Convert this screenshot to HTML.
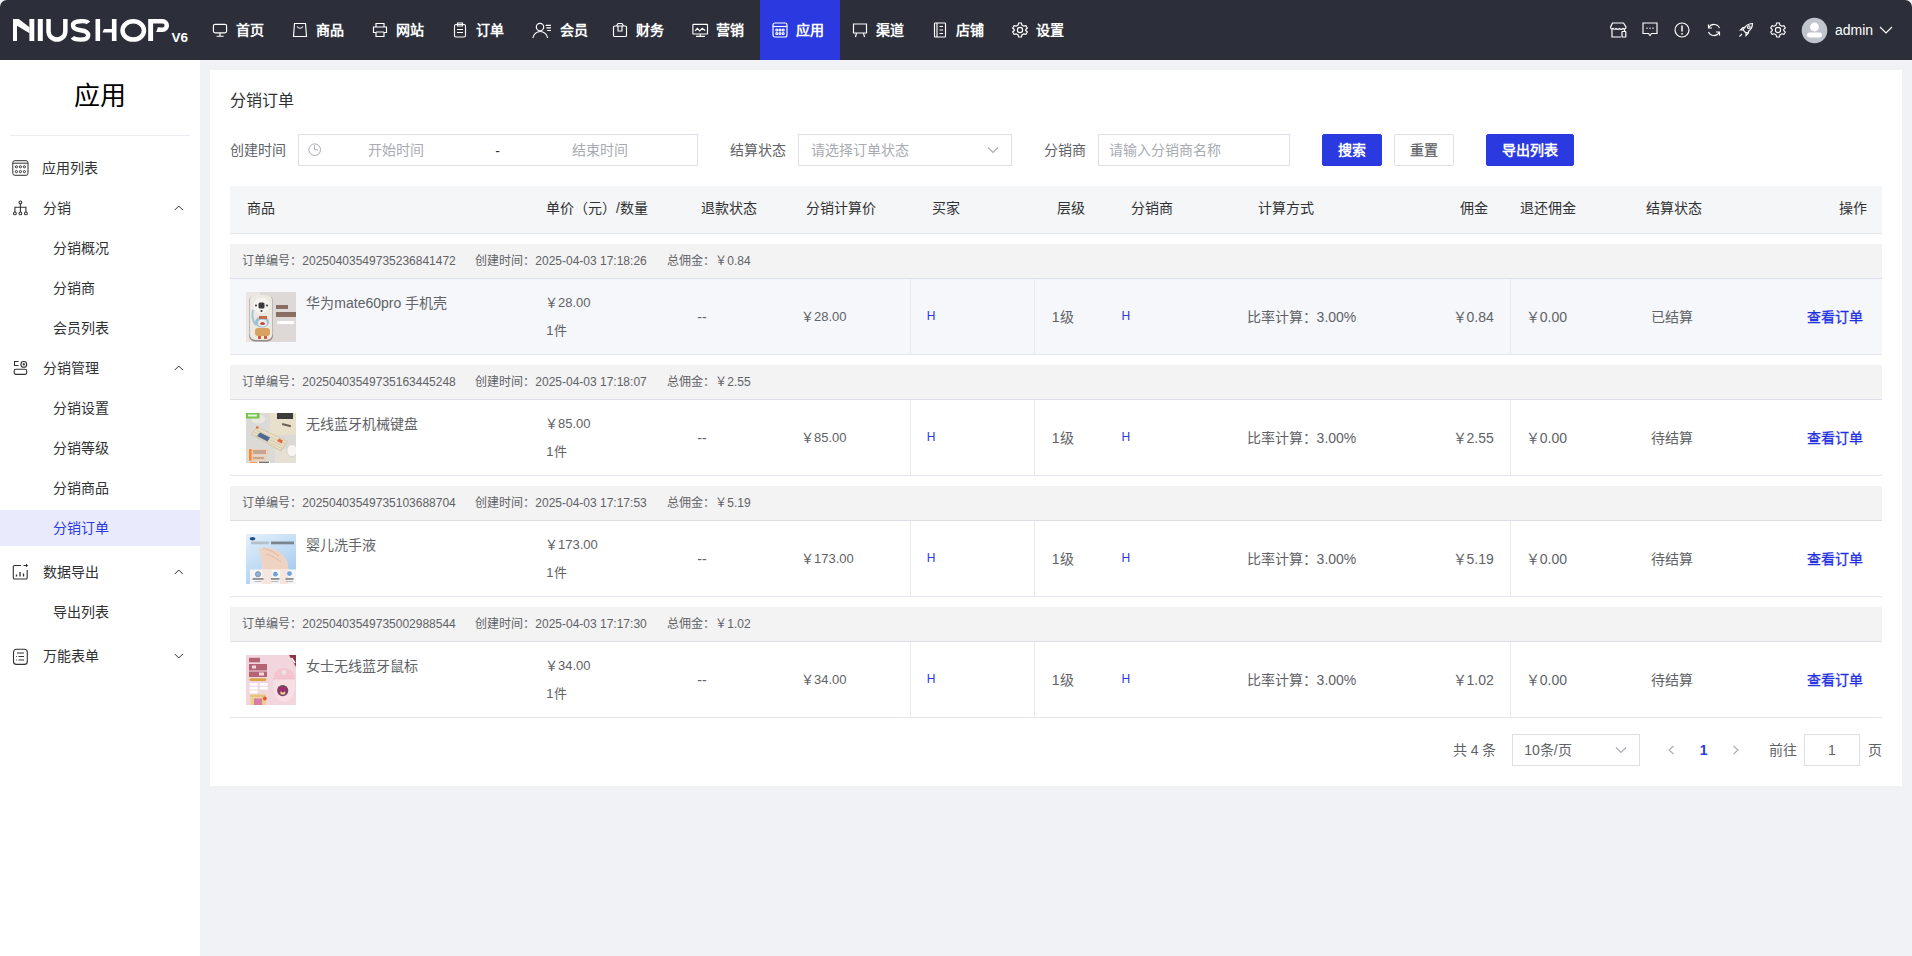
<!DOCTYPE html>
<html lang="zh-CN"><head><meta charset="utf-8">
<style>
*{margin:0;padding:0;box-sizing:border-box}
html,body{width:1912px;height:956px;overflow:hidden;background:#f0f2f5;font-family:"Liberation Sans",sans-serif;font-size:14px;color:#303133}
#top{position:absolute;left:0;top:0;width:1912px;height:60px;background:#2c2f3a;border-radius:7px 7px 0 0;overflow:hidden}
.nav{position:absolute;top:0;height:60px;width:80px;color:#fff;font-size:14px;font-weight:bold}
.nav.on{background:#2a3ae0}
.nav svg{position:absolute;left:12px;top:22px}
.nav span{position:absolute;left:36px;top:20px;line-height:20px;white-space:nowrap}
.ric{position:absolute;top:22px}
#side{position:absolute;left:0;top:60px;width:200px;height:896px;background:#fff}
.stitle{position:absolute;left:0;width:200px;top:18px;text-align:center;font-size:26px;color:#000;line-height:36px}
.sdiv{position:absolute;left:10px;top:75px;width:180px;height:1px;background:#ebedf2}
.mi{position:absolute;left:0;width:200px;height:36px;line-height:36px;font-size:14px;color:#303133}
.mi .t{position:absolute;left:42px;top:2.5px}
.mi.on .t{top:0}
.mi.sub .t{left:53px}
.mi.on{background:#e9ebfc}
.mi.on .t{color:#2a3ae0}
.mi svg.ic{position:absolute;left:12px;top:13px}
.mi svg.ar{position:absolute;left:174px;top:17.5px}
#card{position:absolute;left:210px;top:70px;width:1692px;height:716px;background:#fff}
.abs{position:absolute}
.tx{position:absolute;white-space:nowrap}
.box{position:absolute;border:1px solid #dcdfe6;background:#fff;border-radius:0}
.btn{position:absolute;height:32px;line-height:30px;text-align:center;border:1px solid #dcdfe6;border-radius:2px;background:#fff;color:#606266;font-size:14px}
.btn.pri{background:#2a3ae0;border-color:#2a3ae0;color:#fff;font-weight:bold}
</style></head><body>
<div id="top">
  <svg style="position:absolute;left:0;top:0" width="200" height="60" fill="#fff">
    <rect x="13" y="19" width="4" height="22"/>
    <polygon points="13,19 18.8,19 29.5,27.2 29.5,33.3 17,25.8 13,25.8"/>
    <rect x="29.4" y="19" width="4.9" height="22"/>
    <rect x="37.8" y="19" width="5" height="22"/>
    <path d="M48.55,19 V31.15 A8.4,8.4 0 0 0 65.35,31.15 V19" fill="none" stroke="#fff" stroke-width="4.5"/>
    <path d="M88.3,23 C86.5,20.5 83.5,21.2 80.5,21.2 C76.5,21.2 73,22 73,25.5 C73,29 77,29.8 80.5,30.2 C85,30.7 88.2,32 88.2,35.5 C88.2,39 84.5,39.6 80.5,39.6 C77,39.6 74,39.3 72.5,37.3" fill="none" stroke="#fff" stroke-width="4.4"/>
    <rect x="95.5" y="19" width="4.6" height="22"/>
    <polygon points="104,28.9 112,28.9 112,32.4 102.5,32.4"/>
    <rect x="111.9" y="19" width="4.6" height="22"/>
    <ellipse cx="133.25" cy="30.45" rx="10.7" ry="9.15" fill="none" stroke="#fff" stroke-width="4.5"/>
    <rect x="148.2" y="19" width="4.9" height="22"/>
    <path d="M151,21.3 H162.6 A4.2,4.2 0 0 1 162.6,29.7 H157.5" fill="none" stroke="#fff" stroke-width="4.5"/>
    <polygon points="156,31.9 158.5,27.5 160,27.5 158,31.9"/>
    <text x="171.5" y="41.8" font-family="Liberation Sans" font-weight="bold" font-size="13.5">V6</text>
  </svg>
  <div class="nav" style="left:200px"><svg width="16" height="16" viewBox="0 0 16 16" fill="none" stroke="#fff" stroke-width="1.15"><rect x="1.4" y="2.3" width="13.2" height="8.6" rx="1.8"/><path d="M8,10.9 V14 M4.6,14.2 H11.6"/></svg><span>首页</span></div>
  <div class="nav" style="left:280px"><svg width="16" height="16" viewBox="0 0 16 16" fill="none" stroke="#fff" stroke-width="1.15"><path d="M2.5,1.5 H13.5 L14.5,14.5 H1.5 Z"/><path d="M5,4.5 Q8,8 11,4.5"/></svg><span>商品</span></div>
  <div class="nav" style="left:360px"><svg width="16" height="16" viewBox="0 0 16 16" fill="none" stroke="#fff" stroke-width="1.15"><path d="M4,5 V1.5 H12 V5 M1.5,5 H14.5 V10.5 H12 V14.5 H4 V10.5 H1.5 Z M4,10 H12"/></svg><span>网站</span></div>
  <div class="nav" style="left:440px"><svg width="16" height="16" viewBox="0 0 16 16" fill="none" stroke="#fff" stroke-width="1.15"><rect x="2.5" y="2.5" width="11" height="12.5" rx="1.5"/><path d="M5.5,1 H10.5 V4 H5.5 Z M5,7.5 H11 M5,10.5 H11"/></svg><span>订单</span></div>
  <div class="nav" style="left:520px"><svg width="20" height="17" viewBox="0 0 20 17" fill="none" stroke="#fff" stroke-width="1.15"><circle cx="8" cy="5" r="3.7"/><path d="M0.9,16 A7.4,7.4 0 0 1 15.6,16"/><path d="M13.6,3.3 H19 M14.4,5.9 H19 M15.2,8.5 H19" stroke-width="1.2"/></svg><span style="left:40px">会员</span></div>
  <div class="nav" style="left:600px"><svg width="16" height="16" viewBox="0 0 16 16" fill="none" stroke="#fff" stroke-width="1.15"><rect x="1.5" y="4" width="13" height="10.5" rx="1"/><path d="M4.5,4 L6,1.5 H10 L11.5,4 M6,4 V9 H10 V4"/></svg><span>财务</span></div>
  <div class="nav" style="left:680px"><svg width="18" height="16" viewBox="0 0 18 16" fill="none" stroke="#fff" stroke-width="1.15"><rect x="0.9" y="2.4" width="14.6" height="9.6" rx="0.6"/><path d="M3.2,8.8 L5.3,6.3 L7.8,8.8 L10.2,6.2 L13.2,8.4" stroke-width="1.2"/><path d="M8.2,12 V14 M4,14.3 H13"/></svg><span>营销</span></div>
  <div class="nav on" style="left:760px"><svg width="16" height="16" viewBox="0 0 16 16" fill="none" stroke="#fff" stroke-width="1.15"><rect x="1" y="1" width="14" height="14" rx="2"/><path d="M1,4.5 H15"/><circle cx="4.8" cy="8" r="1"/><circle cx="8" cy="8" r="1"/><circle cx="11.2" cy="8" r="1"/><circle cx="4.8" cy="11.5" r="1"/><circle cx="8" cy="11.5" r="1"/><circle cx="11.2" cy="11.5" r="1"/></svg><span>应用</span></div>
  <div class="nav" style="left:840px"><svg width="16" height="16" viewBox="0 0 16 16" fill="none" stroke="#fff" stroke-width="1.15"><path d="M1.5,2 H14.5 V11 H1.5 Z M4.5,11 L3.5,15 M11.5,11 L12.5,15"/></svg><span>渠道</span></div>
  <div class="nav" style="left:920px"><svg width="16" height="16" viewBox="0 0 16 16" fill="none" stroke="#fff" stroke-width="1.15"><rect x="2.5" y="1" width="11" height="14" rx="0.5"/><path d="M5,1 V15 M7.5,4.5 H11 M7.5,8 H11 M7.5,11.5 H11"/></svg><span>店铺</span></div>
  <div class="nav" style="left:1000px"><svg width="16" height="16" viewBox="0 0 16 16" fill="none" stroke="#fff" stroke-width="1.2"><path d="M6.6,1 H9.4 L9.9,3.1 L11.8,4.2 L13.9,3.6 L15.3,6 L13.7,7.5 V8.5 L15.3,10 L13.9,12.4 L11.8,11.8 L9.9,12.9 L9.4,15 H6.6 L6.1,12.9 L4.2,11.8 L2.1,12.4 L0.7,10 L2.3,8.5 V7.5 L0.7,6 L2.1,3.6 L4.2,4.2 L6.1,3.1 Z"/><circle cx="8" cy="8" r="2.6"/></svg><span>设置</span></div>

  <svg class="ric" style="left:1610px" width="17" height="16" viewBox="0 0 17 16" fill="none" stroke="#fff" stroke-width="1.2"><path d="M2.5,1 H13.5 L16,5 C16,7 14,7.5 13,6.5 C12,7.5 10.5,7.5 9.5,6.5 C8.5,7.5 7,7.5 6,6.5 C5,7.5 3.5,7.5 3,6.5 C2,7.5 0.6,7 0.6,5 Z M2,7.5 V15 H11 M14.5,7.5 V9"/><rect x="12" y="9.5" width="3.8" height="5.5" rx="0.6"/></svg>
  <svg class="ric" style="left:1642px" width="16" height="15" viewBox="0 0 16 15" fill="none" stroke="#fff" stroke-width="1.15"><path d="M1,1 H15 V11.5 H9.5 L8,13.5 L6.5,11.5 H1 Z"/><path d="M4.5,6.3 H5.5 M7.5,6.3 H8.5 M10.5,6.3 H11.5" stroke-width="1.6"/></svg>
  <svg class="ric" style="left:1674px" width="16" height="16" viewBox="0 0 16 16" fill="none" stroke="#fff" stroke-width="1.15"><circle cx="8" cy="8" r="7"/><path d="M8,3.5 V9.5 M8,11 V12.5" stroke-width="1.5"/></svg>
  <svg class="ric" style="left:1706px;top:23px" width="16" height="14" viewBox="0 0 16 14" fill="none" stroke="#fff" stroke-width="1.15"><path d="M13.5,5 A6,6 0 0 0 2.8,4.5 M2.5,9 A6,6 0 0 0 13.2,9.5"/><path d="M2.5,1.5 V5 H6 M13.5,12.5 V9 H10" stroke-width="1.2"/></svg>
  <svg class="ric" style="left:1738px" width="16" height="16" viewBox="0 0 16 16" fill="none" stroke="#fff" stroke-width="1.15"><path d="M14.5,1.5 C10,1.5 7,4 5,8 L8,11 C12,9 14.5,6 14.5,1.5 Z M5,8 L2.5,8 L5,5.5 H7.5 M8,11 V13.5 L10.5,11 V8.5 M4,12 L1.5,14.5"/><circle cx="10.8" cy="5.2" r="1.3"/></svg>
  <svg class="ric" style="left:1770px" width="16" height="16" viewBox="0 0 16 16" fill="none" stroke="#fff" stroke-width="1.1"><path d="M6.6,1 H9.4 L9.9,3.1 L11.8,4.2 L13.9,3.6 L15.3,6 L13.7,7.5 V8.5 L15.3,10 L13.9,12.4 L11.8,11.8 L9.9,12.9 L9.4,15 H6.6 L6.1,12.9 L4.2,11.8 L2.1,12.4 L0.7,10 L2.3,8.5 V7.5 L0.7,6 L2.1,3.6 L4.2,4.2 L6.1,3.1 Z"/><circle cx="8" cy="8" r="2.6"/></svg>
  <svg class="ric" style="left:1801px;top:17px" width="27" height="27" viewBox="0 0 27 27"><circle cx="13.5" cy="13.5" r="12.8" fill="#c0c4cc"/><circle cx="13.5" cy="10" r="4.4" fill="#fff"/><rect x="6" y="15.5" width="15" height="5" rx="2.5" fill="#fff"/></svg>
  <div style="position:absolute;left:1835px;top:20px;line-height:20px;color:#fff;font-size:14px">admin</div>
  <svg class="ric" style="left:1879px;top:26px" width="14" height="8" viewBox="0 0 14 8" fill="none" stroke="#fff" stroke-width="1.2"><path d="M1,1 L7,7 L13,1"/></svg>
</div>

<div id="side">
  <div class="stitle">应用</div>
  <div class="sdiv"></div>
  <div class="mi" style="top:87px"><svg class="ic" width="18" height="18" viewBox="0 0 18 18" fill="none" stroke="#303133" stroke-width="1.1"><g stroke-width="1"><rect x="0.8" y="0.7" width="15.2" height="14.6" rx="2"/><path d="M0.8,3.2 H16"/><circle cx="4.4" cy="6.8" r="1.1"/><circle cx="8.4" cy="6.8" r="1.1"/><circle cx="12.4" cy="6.8" r="1.1"/><circle cx="4.4" cy="11.6" r="1.1"/><circle cx="8.4" cy="11.6" r="1.1"/><circle cx="12.4" cy="11.6" r="1.1"/></g></svg><span class="t">应用列表</span></div>
  <div class="mi" style="top:127px"><svg class="ic" width="18" height="18" viewBox="0 0 18 18" fill="none" stroke="#303133" stroke-width="1.1"><circle cx="8.4" cy="2.4" r="1.4"/><path d="M8.4,3.8 V7.2 M2.9,12 V7.2 H13.9 V12 M8.4,7.2 V12"/><circle cx="2.9" cy="13.4" r="1.4"/><circle cx="8.4" cy="13.4" r="1.4"/><circle cx="13.9" cy="13.4" r="1.4"/></svg><span class="t" style="left:43px">分销</span><svg class="ar" width="10" height="6" viewBox="0 0 10 6" fill="none" stroke="#303133" stroke-width="1"><path d="M0.8,5 L4.8,1 L8.8,5"/></svg></div>
  <div class="mi sub" style="top:167px"><span class="t">分销概况</span></div>
  <div class="mi sub" style="top:207px"><span class="t">分销商</span></div>
  <div class="mi sub" style="top:247px"><span class="t">会员列表</span></div>
  <div class="mi" style="top:287px"><svg class="ic" width="18" height="18" viewBox="0 0 18 18" fill="none" stroke="#303133" stroke-width="1.1"><path d="M6.5,1.5 H2.5 V5.5 H6.5"/><circle cx="11.8" cy="4.4" r="2.9"/><circle cx="11.8" cy="4.4" r="0.6" fill="#303133"/><rect x="2.2" y="9.2" width="12.5" height="5.2" rx="1.6"/></svg><span class="t" style="left:43px">分销管理</span><svg class="ar" width="10" height="6" viewBox="0 0 10 6" fill="none" stroke="#303133" stroke-width="1"><path d="M0.8,5 L4.8,1 L8.8,5"/></svg></div>
  <div class="mi sub" style="top:327px"><span class="t">分销设置</span></div>
  <div class="mi sub" style="top:367px"><span class="t">分销等级</span></div>
  <div class="mi sub" style="top:407px"><span class="t">分销商品</span></div>
  <div class="mi sub on" style="top:450px"><span class="t">分销订单</span></div>
  <div class="mi" style="top:491px"><svg class="ic" width="18" height="18" viewBox="0 0 18 18" fill="none" stroke="#303133" stroke-width="1.1"><path d="M9,1.5 H2.5 A1.2,1.2 0 0 0 1.3,2.7 V13.8 A1.2,1.2 0 0 0 2.5,15 H14 A1.2,1.2 0 0 0 15.2,13.8 V6"/><path d="M11.5,1.5 H15.5 M14,0 L15.5,1.5 L14,3" stroke-width="1"/><path d="M4.5,10.5 V12.5 M8,8 V12.5 M11.5,9.5 V12.5" stroke-width="1.3"/></svg><span class="t" style="left:43px">数据导出</span><svg class="ar" width="10" height="6" viewBox="0 0 10 6" fill="none" stroke="#303133" stroke-width="1"><path d="M0.8,5 L4.8,1 L8.8,5"/></svg></div>
  <div class="mi sub" style="top:531px"><span class="t">导出列表</span></div>
  <div class="mi" style="top:575px"><svg class="ic" width="18" height="18" viewBox="0 0 18 18" fill="none" stroke="#303133" stroke-width="1.1"><rect x="1.5" y="1.2" width="13.8" height="15.2" rx="3"/><path d="M5,5 H12 M6.5,8.5 H12 M6.5,12 H12 M4.2,8.5 H5 M4.2,12 H5"/></svg><span class="t" style="left:43px">万能表单</span><svg class="ar" width="10" height="6" viewBox="0 0 10 6" fill="none" stroke="#303133" stroke-width="1"><path d="M0.8,1 L4.8,5 L8.8,1"/></svg></div>
</div>
<div id="card"></div>
<div id="cardc"><div class="tx" style="left:230.3px;top:88.7px;font-size:16px;line-height:24px;color:#303133;">分销订单</div>
<div class="tx" style="left:230.3px;top:139.5px;font-size:14px;line-height:20px;color:#606266;">创建时间</div>
<div class="box" style="left:298px;top:134px;width:400px;height:32px"></div>
<svg class="abs" style="left:308px;top:143px" width="14" height="14" viewBox="0 0 14 14" fill="none" stroke="#a8abb2" stroke-width="1"><circle cx="6.7" cy="6.7" r="5.8"/><path d="M6.5,2.3 V6.8 H10.2"/></svg>
<div class="tx" style="left:367.8px;top:139.5px;font-size:14px;line-height:20px;color:#a8abb2;">开始时间</div>
<div class="tx" style="left:495.3px;top:140.5px;font-size:14px;line-height:20px;color:#303133;">-</div>
<div class="tx" style="left:571.8px;top:139.5px;font-size:14px;line-height:20px;color:#a8abb2;">结束时间</div>
<div class="tx" style="left:730.3px;top:139.5px;font-size:14px;line-height:20px;color:#606266;">结算状态</div>
<div class="box" style="left:798px;top:134px;width:214px;height:32px"></div>
<div class="tx" style="left:810.8px;top:139.5px;font-size:14px;line-height:20px;color:#a8abb2;">请选择订单状态</div>
<svg class="abs" style="left:987px;top:146px" width="12" height="8" viewBox="0 0 12 8" fill="none" stroke="#a8abb2" stroke-width="1.1"><path d="M1,1.5 L6,6.5 L11,1.5"/></svg>
<div class="tx" style="left:1044.3px;top:139.5px;font-size:14px;line-height:20px;color:#606266;">分销商</div>
<div class="box" style="left:1098px;top:134px;width:192px;height:32px"></div>
<div class="tx" style="left:1109.3px;top:139.5px;font-size:14px;line-height:20px;color:#a8abb2;">请输入分销商名称</div>
<div class="btn pri" style="left:1322px;top:134px;width:60px">搜索</div>
<div class="btn" style="left:1394px;top:134px;width:60px;-webkit-text-stroke:0.25px #606266">重置</div>
<div class="btn pri" style="left:1486px;top:134px;width:88px">导出列表</div>
<div class="abs" style="left:230px;top:186px;width:1652px;height:47px;background:#f5f6f8"></div>
<div class="abs" style="left:230px;top:233px;width:1652px;height:1px;background:#e3e6ef"></div>
<div class="tx" style="left:246.60000000000002px;top:197.7px;font-size:14px;line-height:20px;color:#303133;">商品</div>
<div class="tx" style="left:546.0999999999999px;top:197.7px;font-size:14px;line-height:20px;color:#303133;">单价（元）/数量</div>
<div class="tx" style="left:701.3px;top:197.7px;font-size:14px;line-height:20px;color:#303133;">退款状态</div>
<div class="tx" style="left:806.0px;top:197.7px;font-size:14px;line-height:20px;color:#303133;">分销计算价</div>
<div class="tx" style="left:932.0px;top:197.7px;font-size:14px;line-height:20px;color:#303133;">买家</div>
<div class="tx" style="left:1057.3px;top:197.7px;font-size:14px;line-height:20px;color:#303133;">层级</div>
<div class="tx" style="left:1131.2px;top:197.7px;font-size:14px;line-height:20px;color:#303133;">分销商</div>
<div class="tx" style="left:1257.5px;top:197.7px;font-size:14px;line-height:20px;color:#303133;">计算方式</div>
<div class="tx" style="left:1460.0px;top:197.7px;font-size:14px;line-height:20px;color:#303133;">佣金</div>
<div class="tx" style="left:1519.8px;top:197.7px;font-size:14px;line-height:20px;color:#303133;">退还佣金</div>
<div class="tx" style="left:1646.2px;top:197.7px;font-size:14px;line-height:20px;color:#303133;">结算状态</div>
<div class="tx" style="left:1838.5px;top:197.7px;font-size:14px;line-height:20px;color:#303133;">操作</div>
<div class="abs" style="left:230px;top:244px;width:1652px;height:34px;background:#f3f3f3"></div>
<div class="abs" style="left:230px;top:278px;width:1652px;height:1px;background:#dcdfe9"></div>
<div class="abs" style="left:230px;top:279px;width:1652px;height:75px;background:#f5f7fb"></div>
<div class="abs" style="left:230px;top:354px;width:1652px;height:1px;background:#e5e7ef"></div>
<div class="abs" style="left:910px;top:279px;width:1px;height:75px;background:#e8eaf1"></div>
<div class="abs" style="left:1034px;top:279px;width:1px;height:75px;background:#e8eaf1"></div>
<div class="abs" style="left:1510px;top:279px;width:1px;height:75px;background:#e8eaf1"></div>
<div class="tx" style="left:242.3px;top:252.5px;font-size:12px;line-height:16px;color:#606266;">订单编号：20250403549735236841472</div>
<div class="tx" style="left:475.3px;top:252.5px;font-size:12px;line-height:16px;color:#606266;">创建时间：2025-04-03 17:18:26</div>
<div class="tx" style="left:667.3px;top:252.5px;font-size:12px;line-height:16px;color:#606266;">总佣金：￥0.84</div>
<div class="abs" style="left:246px;top:292px;width:50px;height:50px"><svg width="50" height="50" viewBox="0 0 50 50"><rect width="50" height="50" fill="#ded9d6"/><rect x="0" y="0" width="14" height="50" fill="#ebe6e2"/><rect x="3" y="3.5" width="24" height="46" rx="6" fill="#8f8a84"/><rect x="3.5" y="3" width="23" height="45" rx="6" fill="#ece9e2"/><circle cx="15.5" cy="13.5" r="8" fill="#f4f2ee"/><rect x="12.5" y="10.5" width="6" height="6" rx="1.5" fill="#3a3a3a"/><circle cx="10" cy="13.5" r="1" fill="#333"/><circle cx="21" cy="13.5" r="1" fill="#333"/><circle cx="15.5" cy="19" r="1" fill="#333"/><path d="M7,18 Q5,28 10,33" stroke="#a8c4d4" stroke-width="2" fill="none"/><ellipse cx="16" cy="30" rx="7" ry="5.5" fill="#9fc0cf"/><ellipse cx="16.5" cy="31" rx="4.5" ry="3.5" fill="#eee"/><rect x="13" y="24" width="8" height="3" fill="#c86a4a"/><ellipse cx="16.5" cy="31.5" rx="2.5" ry="1.5" fill="#c04a3a"/><rect x="9" y="36" width="15" height="8" rx="3" fill="#d9a160"/><rect x="12" y="44" width="3" height="3" fill="#d06030"/><rect x="18" y="44" width="3" height="3" fill="#d06030"/><rect x="30" y="13" width="12" height="4" fill="#8a6e62"/><rect x="30" y="20" width="20" height="5" fill="#8a6e62"/><rect x="31" y="29" width="17" height="3" rx="1.5" fill="#fff"/></svg></div>
<div class="tx" style="left:306.3px;top:292.5px;font-size:14px;line-height:20px;color:#606266;">华为mate60pro 手机壳</div>
<div class="tx" style="left:545.0px;top:292.6px;font-size:13px;line-height:20px;color:#606266;">￥28.00</div>
<div class="tx" style="left:546.3px;top:320.5px;font-size:13px;line-height:20px;color:#606266;">1件</div>
<div class="tx" style="left:697.3px;top:306.5px;font-size:14px;line-height:20px;color:#606266;">--</div>
<div class="tx" style="left:801.0px;top:306.5px;font-size:13px;line-height:20px;color:#606266;">￥28.00</div>
<div class="tx" style="left:926.8px;top:305.5px;font-size:12px;line-height:20px;color:#2a3ae0;">H</div>
<div class="tx" style="left:1051.8px;top:306.5px;font-size:14px;line-height:20px;color:#606266;">1级</div>
<div class="tx" style="left:1121.6px;top:305.5px;font-size:12px;line-height:20px;color:#2a3ae0;">H</div>
<div class="tx" style="left:1246.6px;top:306.5px;font-size:14px;line-height:20px;color:#606266;">比率计算：3.00%</div>
<div class="tx" style="left:1393.8px;top:306.5px;font-size:14px;line-height:20px;color:#606266;width:100px;text-align:right">￥0.84</div>
<div class="tx" style="left:1525.8px;top:306.5px;font-size:14px;line-height:20px;color:#606266;">￥0.00</div>
<div class="tx" style="left:1650.8px;top:306.5px;font-size:14px;line-height:20px;color:#606266;">已结算</div>
<div class="tx" style="left:1807.3px;top:307.0px;font-size:14px;line-height:20px;color:#1f30e0;-webkit-text-stroke:0.3px #1f30e0">查看订单</div>
<div class="abs" style="left:230px;top:365px;width:1652px;height:34px;background:#f3f3f3"></div>
<div class="abs" style="left:230px;top:399px;width:1652px;height:1px;background:#dcdfe9"></div>
<div class="abs" style="left:230px;top:400px;width:1652px;height:75px;background:#fff"></div>
<div class="abs" style="left:230px;top:475px;width:1652px;height:1px;background:#e5e7ef"></div>
<div class="abs" style="left:910px;top:400px;width:1px;height:75px;background:#e8eaf1"></div>
<div class="abs" style="left:1034px;top:400px;width:1px;height:75px;background:#e8eaf1"></div>
<div class="abs" style="left:1510px;top:400px;width:1px;height:75px;background:#e8eaf1"></div>
<div class="tx" style="left:242.3px;top:373.5px;font-size:12px;line-height:16px;color:#606266;">订单编号：20250403549735163445248</div>
<div class="tx" style="left:475.3px;top:373.5px;font-size:12px;line-height:16px;color:#606266;">创建时间：2025-04-03 17:18:07</div>
<div class="tx" style="left:667.3px;top:373.5px;font-size:12px;line-height:16px;color:#606266;">总佣金：￥2.55</div>
<div class="abs" style="left:246px;top:413px;width:50px;height:50px"><svg width="50" height="50" viewBox="0 0 50 50"><rect width="50" height="50" fill="#dcdad7"/><rect x="29" y="36" width="21" height="14" fill="#e6e0d4"/><ellipse cx="12" cy="6" rx="7" ry="4.5" fill="#ebe7e1"/><rect x="0" y="0" width="13.5" height="5.5" fill="#72c44a"/><rect x="2" y="1.5" width="9" height="2" fill="#e8f4e0"/><rect x="24" y="0" width="26" height="22" fill="#e8e0cb"/><rect x="31" y="0" width="16" height="6" fill="#3c3c3a"/><rect x="36" y="11" width="9" height="2" fill="#6a6258" transform="rotate(15 40 12)"/><polygon points="4.5,21.5 11.3,13.6 41.8,28.2 35,38.4" fill="#cfc3a8"/><polygon points="5.5,21.3 11.6,14.5 40.8,28.4 34.6,37.3" fill="#e9dfc6"/><path d="M8,19 L37,33 M10,17 L39,31 M7,21.5 L36,35.5" stroke="#c8bca0" stroke-width="0.6"/><polygon points="11,23 14,19.5 24,24.5 21.5,28.5" fill="#4f6894"/><polygon points="31,28 33,25.5 37,27.5 35.5,30.5" fill="#e46a42"/><rect x="10" y="13.5" width="2.5" height="2" fill="#e46a42"/><ellipse cx="46" cy="37.5" rx="5.2" ry="6.2" fill="#f6f5f2"/><ellipse cx="46" cy="37.5" rx="5.2" ry="6.2" fill="none" stroke="#bdb8b0" stroke-width="0.5"/><rect x="3" y="36" width="19" height="5.8" fill="#efcdb2"/><rect x="3" y="43" width="17" height="4.6" fill="#efcdb2"/><rect x="3" y="36" width="2.6" height="11.6" fill="#f28a2e"/><rect x="7" y="37.5" width="13" height="1" fill="#9a8070"/><rect x="7" y="39.5" width="13" height="1" fill="#9a8070"/><rect x="7" y="44.5" width="11" height="1" fill="#9a8070"/><rect x="3" y="48.5" width="21" height="1.8" fill="#fff"/><rect x="3.5" y="48.6" width="8" height="1.6" fill="#f3a05a"/><rect x="13" y="48.6" width="10" height="1.6" fill="#777"/></svg></div>
<div class="tx" style="left:306.3px;top:413.5px;font-size:14px;line-height:20px;color:#606266;">无线蓝牙机械键盘</div>
<div class="tx" style="left:545.0px;top:413.6px;font-size:13px;line-height:20px;color:#606266;">￥85.00</div>
<div class="tx" style="left:546.3px;top:441.5px;font-size:13px;line-height:20px;color:#606266;">1件</div>
<div class="tx" style="left:697.3px;top:427.5px;font-size:14px;line-height:20px;color:#606266;">--</div>
<div class="tx" style="left:801.0px;top:427.5px;font-size:13px;line-height:20px;color:#606266;">￥85.00</div>
<div class="tx" style="left:926.8px;top:426.5px;font-size:12px;line-height:20px;color:#2a3ae0;">H</div>
<div class="tx" style="left:1051.8px;top:427.5px;font-size:14px;line-height:20px;color:#606266;">1级</div>
<div class="tx" style="left:1121.6px;top:426.5px;font-size:12px;line-height:20px;color:#2a3ae0;">H</div>
<div class="tx" style="left:1246.6px;top:427.5px;font-size:14px;line-height:20px;color:#606266;">比率计算：3.00%</div>
<div class="tx" style="left:1393.8px;top:427.5px;font-size:14px;line-height:20px;color:#606266;width:100px;text-align:right">￥2.55</div>
<div class="tx" style="left:1525.8px;top:427.5px;font-size:14px;line-height:20px;color:#606266;">￥0.00</div>
<div class="tx" style="left:1650.8px;top:427.5px;font-size:14px;line-height:20px;color:#606266;">待结算</div>
<div class="tx" style="left:1807.3px;top:428.0px;font-size:14px;line-height:20px;color:#1f30e0;-webkit-text-stroke:0.3px #1f30e0">查看订单</div>
<div class="abs" style="left:230px;top:486px;width:1652px;height:34px;background:#f3f3f3"></div>
<div class="abs" style="left:230px;top:520px;width:1652px;height:1px;background:#dcdfe9"></div>
<div class="abs" style="left:230px;top:521px;width:1652px;height:75px;background:#fff"></div>
<div class="abs" style="left:230px;top:596px;width:1652px;height:1px;background:#e5e7ef"></div>
<div class="abs" style="left:910px;top:521px;width:1px;height:75px;background:#e8eaf1"></div>
<div class="abs" style="left:1034px;top:521px;width:1px;height:75px;background:#e8eaf1"></div>
<div class="abs" style="left:1510px;top:521px;width:1px;height:75px;background:#e8eaf1"></div>
<div class="tx" style="left:242.3px;top:494.5px;font-size:12px;line-height:16px;color:#606266;">订单编号：20250403549735103688704</div>
<div class="tx" style="left:475.3px;top:494.5px;font-size:12px;line-height:16px;color:#606266;">创建时间：2025-04-03 17:17:53</div>
<div class="tx" style="left:667.3px;top:494.5px;font-size:12px;line-height:16px;color:#606266;">总佣金：￥5.19</div>
<div class="abs" style="left:246px;top:534px;width:50px;height:50px"><svg width="50" height="50" viewBox="0 0 50 50"><defs><linearGradient id="g3" x1="0" y1="0" x2="0.6" y2="1"><stop offset="0" stop-color="#e4f1fb"/><stop offset="1" stop-color="#a6cbef"/></linearGradient></defs><rect width="50" height="50" fill="url(#g3)"/><ellipse cx="6.5" cy="4.8" rx="2.8" ry="1.8" fill="#1f4f8f"/><rect x="5" y="7.5" width="18" height="2.8" fill="#b4c0cc"/><rect x="25" y="7.5" width="23" height="2.8" fill="#7a8590"/><path d="M13,14.5 Q22,12.5 30,16 Q38,20 41.5,28 L42.5,36 L16.5,36 Q15.5,26 13,14.5 Z" fill="#efd3c2"/><path d="M17,14 Q26,16 33,22 M20,20 Q28,22 35,28" stroke="#e2b9a4" stroke-width="1" fill="none"/><rect x="4" y="35.5" width="46" height="15" fill="#f5f5f7"/><rect x="16.5" y="35.5" width="9" height="15" fill="#f6e6e0"/><rect x="34" y="35.5" width="8" height="15" fill="#f6e6e0"/><circle cx="12" cy="40.2" r="2.6" fill="#8ab4de"/><circle cx="12" cy="40.2" r="2.6" fill="none" stroke="#777" stroke-width="0.6"/><circle cx="29.4" cy="40.2" r="2.4" fill="#6ea2d8"/><circle cx="43.5" cy="39.6" r="2.4" fill="#6ea2d8"/><rect x="6.5" y="44.3" width="11" height="1.3" fill="#666"/><rect x="25" y="44.3" width="8.5" height="1.3" fill="#666"/><rect x="39.5" y="44.3" width="8" height="1.3" fill="#666"/><rect x="8.5" y="47" width="7" height="0.8" fill="#aaa"/><rect x="25.5" y="47" width="7" height="0.8" fill="#aaa"/><rect x="40" y="47" width="7" height="0.8" fill="#aaa"/></svg></div>
<div class="tx" style="left:306.3px;top:534.5px;font-size:14px;line-height:20px;color:#606266;">婴儿洗手液</div>
<div class="tx" style="left:545.0px;top:534.6px;font-size:13px;line-height:20px;color:#606266;">￥173.00</div>
<div class="tx" style="left:546.3px;top:562.5px;font-size:13px;line-height:20px;color:#606266;">1件</div>
<div class="tx" style="left:697.3px;top:548.5px;font-size:14px;line-height:20px;color:#606266;">--</div>
<div class="tx" style="left:801.0px;top:548.5px;font-size:13px;line-height:20px;color:#606266;">￥173.00</div>
<div class="tx" style="left:926.8px;top:547.5px;font-size:12px;line-height:20px;color:#2a3ae0;">H</div>
<div class="tx" style="left:1051.8px;top:548.5px;font-size:14px;line-height:20px;color:#606266;">1级</div>
<div class="tx" style="left:1121.6px;top:547.5px;font-size:12px;line-height:20px;color:#2a3ae0;">H</div>
<div class="tx" style="left:1246.6px;top:548.5px;font-size:14px;line-height:20px;color:#606266;">比率计算：3.00%</div>
<div class="tx" style="left:1393.8px;top:548.5px;font-size:14px;line-height:20px;color:#606266;width:100px;text-align:right">￥5.19</div>
<div class="tx" style="left:1525.8px;top:548.5px;font-size:14px;line-height:20px;color:#606266;">￥0.00</div>
<div class="tx" style="left:1650.8px;top:548.5px;font-size:14px;line-height:20px;color:#606266;">待结算</div>
<div class="tx" style="left:1807.3px;top:549.0px;font-size:14px;line-height:20px;color:#1f30e0;-webkit-text-stroke:0.3px #1f30e0">查看订单</div>
<div class="abs" style="left:230px;top:607px;width:1652px;height:34px;background:#f3f3f3"></div>
<div class="abs" style="left:230px;top:641px;width:1652px;height:1px;background:#dcdfe9"></div>
<div class="abs" style="left:230px;top:642px;width:1652px;height:75px;background:#fff"></div>
<div class="abs" style="left:230px;top:717px;width:1652px;height:1px;background:#e5e7ef"></div>
<div class="abs" style="left:910px;top:642px;width:1px;height:75px;background:#e8eaf1"></div>
<div class="abs" style="left:1034px;top:642px;width:1px;height:75px;background:#e8eaf1"></div>
<div class="abs" style="left:1510px;top:642px;width:1px;height:75px;background:#e8eaf1"></div>
<div class="tx" style="left:242.3px;top:615.5px;font-size:12px;line-height:16px;color:#606266;">订单编号：20250403549735002988544</div>
<div class="tx" style="left:475.3px;top:615.5px;font-size:12px;line-height:16px;color:#606266;">创建时间：2025-04-03 17:17:30</div>
<div class="tx" style="left:667.3px;top:615.5px;font-size:12px;line-height:16px;color:#606266;">总佣金：￥1.02</div>
<div class="abs" style="left:246px;top:655px;width:50px;height:50px"><svg width="50" height="50" viewBox="0 0 50 50"><rect width="50" height="50" fill="#f1d7dd"/><rect x="3" y="2.8" width="11" height="4.5" fill="#b46474"/><rect x="3" y="9" width="18" height="6.5" fill="#b46474"/><rect x="3" y="16.5" width="18" height="5.5" fill="#b46474"/><rect x="6" y="10.5" width="4" height="3" fill="#f1d7dd"/><rect x="13" y="17.5" width="5" height="3" fill="#f1d7dd"/><rect x="3.4" y="23.2" width="17" height="2.8" rx="1.4" fill="#dba24a"/><rect x="3.5" y="28" width="8.5" height="2.8" rx="1.4" fill="#fff"/><rect x="13.5" y="28" width="8.5" height="2.8" rx="1.4" fill="#fff"/><rect x="3.5" y="31.8" width="8.5" height="2.8" rx="1.4" fill="#fff"/><rect x="13.5" y="31.8" width="8.5" height="2.8" rx="1.4" fill="#fff"/><rect x="3.5" y="35.6" width="8.5" height="2.8" rx="1.4" fill="#fff"/><rect x="4" y="39.5" width="16" height="2.5" rx="1.2" fill="#e8c47a"/><rect x="4.5" y="42.5" width="15.5" height="8" fill="#ecd08a"/><rect x="8" y="43.5" width="8" height="6.5" fill="#d77aa6"/><circle cx="18.8" cy="43.5" r="1.9" fill="#e9532e"/><path d="M43,0 L50,0 L50,12 Z" fill="#8a3444"/><path d="M45.5,3 L49,8" stroke="#fff" stroke-width="1.5"/><ellipse cx="38.1" cy="30" rx="11" ry="17" fill="#f7dfe3"/><path d="M27.2,24 Q28,13 38.1,13 Q48.2,13 49,24 Z" fill="#f4c4cf"/><path d="M27.2,24 H49" stroke="#e4aab8" stroke-width="0.6" stroke-dasharray="1.2 0.8"/><rect x="36" y="15" width="4" height="4.5" rx="1.6" fill="#e9e6e8"/><circle cx="36.7" cy="35.6" r="5.6" fill="#5e5358"/><circle cx="36.7" cy="36.3" r="4.2" fill="#a32c6e"/><circle cx="33.5" cy="32.8" r="1.3" fill="#a32c6e"/><circle cx="39.9" cy="32.8" r="1.3" fill="#a32c6e"/><ellipse cx="36.8" cy="37.8" rx="2.6" ry="1.9" fill="#e7d79e"/><ellipse cx="36.8" cy="36.8" rx="1.2" ry="0.8" fill="#5a1e3e"/></svg></div>
<div class="tx" style="left:306.3px;top:655.5px;font-size:14px;line-height:20px;color:#606266;">女士无线蓝牙鼠标</div>
<div class="tx" style="left:545.0px;top:655.6px;font-size:13px;line-height:20px;color:#606266;">￥34.00</div>
<div class="tx" style="left:546.3px;top:683.5px;font-size:13px;line-height:20px;color:#606266;">1件</div>
<div class="tx" style="left:697.3px;top:669.5px;font-size:14px;line-height:20px;color:#606266;">--</div>
<div class="tx" style="left:801.0px;top:669.5px;font-size:13px;line-height:20px;color:#606266;">￥34.00</div>
<div class="tx" style="left:926.8px;top:668.5px;font-size:12px;line-height:20px;color:#2a3ae0;">H</div>
<div class="tx" style="left:1051.8px;top:669.5px;font-size:14px;line-height:20px;color:#606266;">1级</div>
<div class="tx" style="left:1121.6px;top:668.5px;font-size:12px;line-height:20px;color:#2a3ae0;">H</div>
<div class="tx" style="left:1246.6px;top:669.5px;font-size:14px;line-height:20px;color:#606266;">比率计算：3.00%</div>
<div class="tx" style="left:1393.8px;top:669.5px;font-size:14px;line-height:20px;color:#606266;width:100px;text-align:right">￥1.02</div>
<div class="tx" style="left:1525.8px;top:669.5px;font-size:14px;line-height:20px;color:#606266;">￥0.00</div>
<div class="tx" style="left:1650.8px;top:669.5px;font-size:14px;line-height:20px;color:#606266;">待结算</div>
<div class="tx" style="left:1807.3px;top:670.0px;font-size:14px;line-height:20px;color:#1f30e0;-webkit-text-stroke:0.3px #1f30e0">查看订单</div>
<div class="tx" style="left:1452.8px;top:740.0px;font-size:14px;line-height:20px;color:#606266;">共 4 条</div>
<div class="box" style="left:1512px;top:734px;width:128px;height:32px"></div>
<div class="tx" style="left:1524.3px;top:740.0px;font-size:14px;line-height:20px;color:#606266;">10条/页</div>
<svg class="abs" style="left:1615px;top:746px" width="12" height="8" viewBox="0 0 12 8" fill="none" stroke="#a8abb2" stroke-width="1.1"><path d="M1,1.5 L6,6.5 L11,1.5"/></svg>
<svg class="abs" style="left:1667px;top:745px" width="8" height="10" viewBox="0 0 8 10" fill="none" stroke="#a8abb2" stroke-width="1.1"><path d="M6.5,1 L2,5 L6.5,9"/></svg>
<div class="tx" style="left:1699.8px;top:740.0px;font-size:14px;line-height:20px;color:#2a3ae0;font-weight:bold">1</div>
<svg class="abs" style="left:1732px;top:745px" width="8" height="10" viewBox="0 0 8 10" fill="none" stroke="#a8abb2" stroke-width="1.1"><path d="M1.5,1 L6,5 L1.5,9"/></svg>
<div class="tx" style="left:1768.8px;top:740.0px;font-size:14px;line-height:20px;color:#606266;">前往</div>
<div class="box" style="left:1804px;top:734px;width:56px;height:32px"></div>
<div class="tx" style="left:1803.8px;top:740.0px;font-size:14px;line-height:20px;color:#606266;width:56px;text-align:center">1</div>
<div class="tx" style="left:1868.3px;top:740.0px;font-size:14px;line-height:20px;color:#606266;">页</div></div><!--endcard-->









</body></html>
